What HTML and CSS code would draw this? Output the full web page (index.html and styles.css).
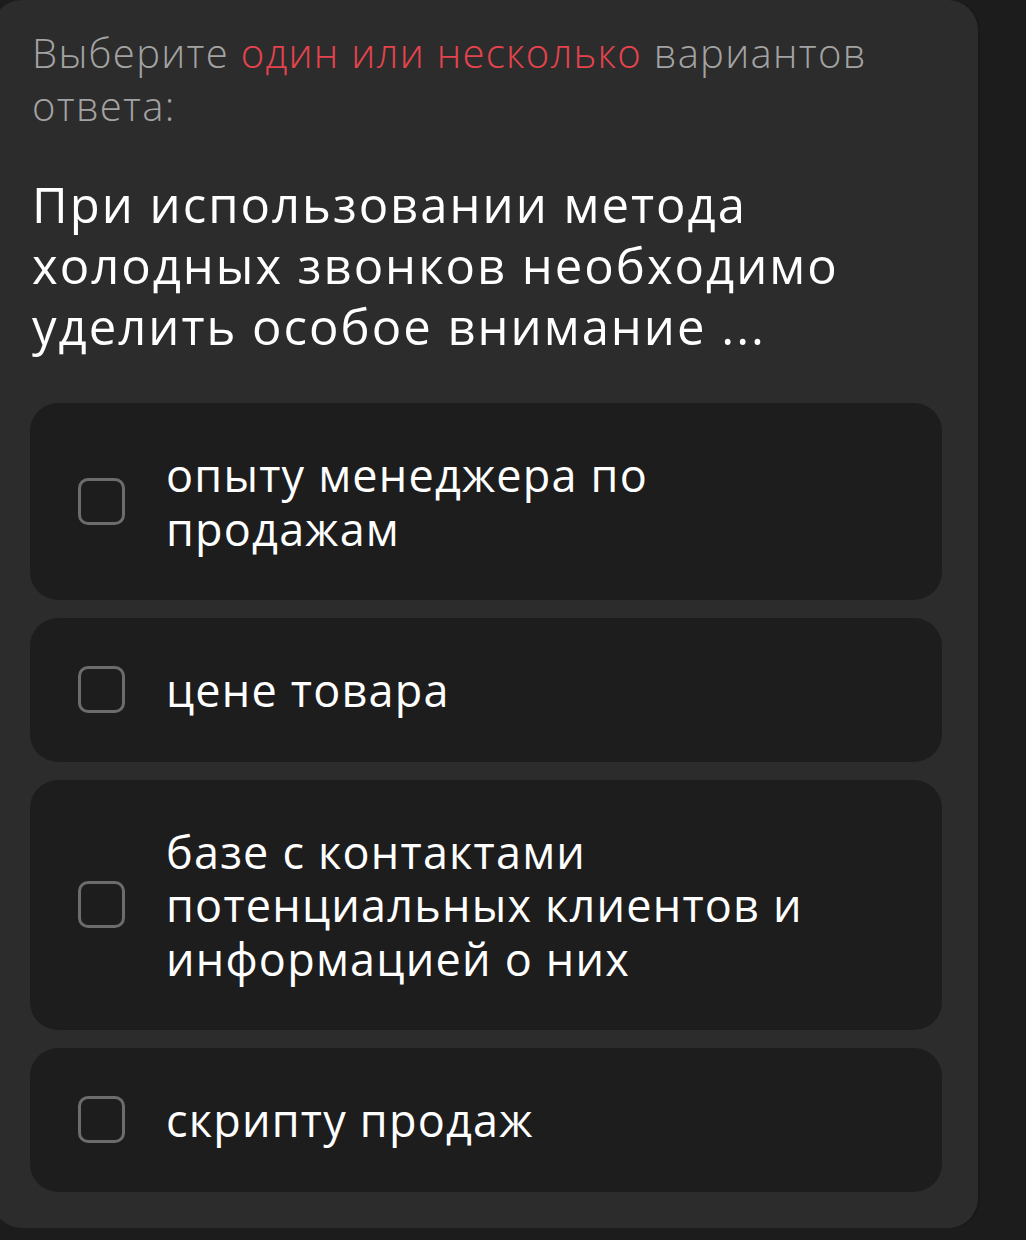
FILE: index.html
```html
<!DOCTYPE html>
<html lang="ru">
<head>
<meta charset="utf-8">
<title>Вопрос</title>
<link rel="stylesheet" href="styles.css">
</head>
<body>
<div class="page">
  <section class="card">
    <p class="hint">Выберите <span class="accent">один или несколько</span> вариантов ответа:</p>
    <h1 class="question">При использовании метода холодных звонков необходимо уделить особое внимание ...</h1>
    <div class="options">
      <label class="option"><span class="box"></span><span class="text">опыту менеджера по продажам</span></label>
      <label class="option"><span class="box"></span><span class="text">цене товара</span></label>
      <label class="option"><span class="box"></span><span class="text">базе с контактами потенциальных клиентов и информацией о них</span></label>
      <label class="option"><span class="box"></span><span class="text">скрипту продаж</span></label>
    </div>
  </section>
</div>
</body>
</html>
```
FILE: styles.css
```css
html, body {
  margin: 0;
  padding: 0;
  background: #1c1c1c;
}
body {
  font-family: "Open Sans", "Noto Sans", sans-serif;
  overflow: hidden;
}
.page {
  width: 1026px;
  height: 1240px;
  background: #1c1c1c;
}
.card {
  box-sizing: border-box;
  margin-left: -8px;
  width: 986px;
  height: 1228px;
  background: #2c2c2c;
  border-radius: 30px;
  padding: 26px 36px 35px 38px;
  box-shadow: 2px 0 0 #191919;
}
.hint {
  margin: 0 0 42px 0;
  padding-left: 2px;
  font-size: 40px;
  line-height: 53px;
  font-weight: 300;
  letter-spacing: 1.3px;
  color: #a3a3a3;
}
.accent {
  color: #e6434e;
}
.question {
  margin: 0 0 46px 0;
  padding-left: 2px;
  font-size: 49px;
  line-height: 61px;
  font-weight: 500;
  letter-spacing: 2px;
  color: #ffffff;
}
.options {
  display: flex;
  flex-direction: column;
  gap: 18px;
}
.option {
  display: flex;
  align-items: center;
  gap: 41px;
  background: #1d1d1d;
  border-radius: 28px;
  padding: 45px 76px 45px 48px;
}
.box {
  flex: none;
  box-sizing: border-box;
  width: 47px;
  height: 47px;
  border: 3px solid #6c6c6c;
  border-radius: 10px;
}
.text {
  font-size: 45px;
  line-height: 53.5px;
  letter-spacing: 1.2px;
  color: #ffffff;
  font-weight: 400;
}
```
